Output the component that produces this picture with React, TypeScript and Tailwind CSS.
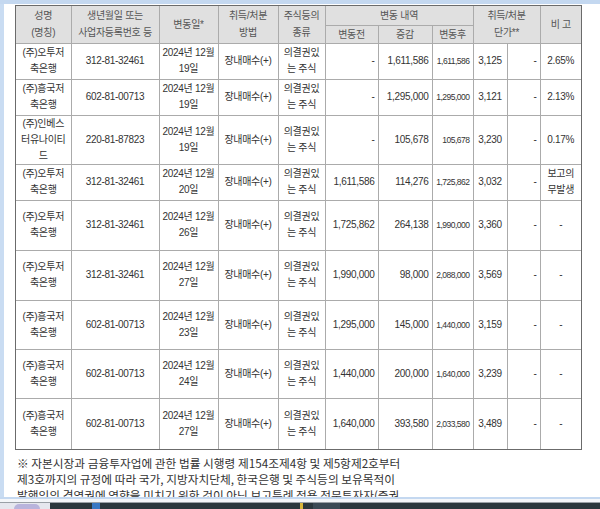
import React from "react";

type Row = {
  name: string[];
  reg: string;
  day: string;
  before: string;
  change: string;
  after: string;
  price: string;
  note: string[];
  h: string;
};

const OTU = ["(주)오투저", "축은행"];
const HK = ["(주)흥국저", "축은행"];

const ROWS: Row[] = [
  { name: OTU, reg: "312-81-32461", day: "19일", before: "-", change: "1,611,586", after: "1,611,586", price: "3,125", note: ["2.65%"], h: "h-[36px]" },
  { name: HK, reg: "602-81-00713", day: "19일", before: "-", change: "1,295,000", after: "1,295,000", price: "3,121", note: ["2.13%"], h: "h-[36px]" },
  { name: ["(주)인베스", "터유나이티", "드"], reg: "220-81-87823", day: "19일", before: "-", change: "105,678", after: "105,678", price: "3,230", note: ["0.17%"], h: "h-[49px]" },
  { name: OTU, reg: "312-81-32461", day: "20일", before: "1,611,586", change: "114,276", after: "1,725,862", price: "3,032", note: ["보고의", "무발생"], h: "h-[36px]" },
  { name: OTU, reg: "312-81-32461", day: "26일", before: "1,725,862", change: "264,138", after: "1,990,000", price: "3,360", note: ["-"], h: "h-[50px]" },
  { name: OTU, reg: "312-81-32461", day: "27일", before: "1,990,000", change: "98,000", after: "2,088,000", price: "3,569", note: ["-"], h: "h-[50px]" },
  { name: HK, reg: "602-81-00713", day: "23일", before: "1,295,000", change: "145,000", after: "1,440,000", price: "3,159", note: ["-"], h: "h-[49px]" },
  { name: HK, reg: "602-81-00713", day: "24일", before: "1,440,000", change: "200,000", after: "1,640,000", price: "3,239", note: ["-"], h: "h-[49px]" },
  { name: HK, reg: "602-81-00713", day: "27일", before: "1,640,000", change: "393,580", after: "2,033,580", price: "3,489", note: ["-"], h: "h-[51px]" },
];

function Lines({ lines }: { lines: string[] }) {
  return (
    <>
      {lines.map((l, i) => (
        <React.Fragment key={i}>
          {i > 0 && <br />}
          {l}
        </React.Fragment>
      ))}
    </>
  );
}

const th = "border border-[#ababab] bg-[#e0e0e0] px-[2px] py-0 text-center align-middle font-normal text-[#555] leading-[17px]";
const td = "border border-[#ababab] px-[3px] py-0 align-middle text-[#333] leading-[16px]";

export default function App() {
  return (
    <div className="relative flex h-[509px] w-[600px] flex-col overflow-hidden bg-white font-['Liberation_Sans','Noto_Sans_CJK_KR',sans-serif]">
      <div className="h-[4px] shrink-0 bg-[#c4d8f0]" />
      <div className="flex min-h-0 flex-1">
        <div className="w-[4px] shrink-0 bg-[#c9dcf2]" />
        <div className="min-w-0 flex-1 pl-[11px] pt-[1px]">
          <div className="w-[567px] border border-[#6b6b6b]">
            <table className="w-full table-fixed border-collapse border-hidden text-[10px] tracking-[-0.3px]">
              <colgroup>
                <col className="w-[55px]" />
                <col className="w-[88px]" />
                <col className="w-[59px]" />
                <col className="w-[60px]" />
                <col className="w-[47px]" />
                <col className="w-[53px]" />
                <col className="w-[54px]" />
                <col className="w-[41px]" />
                <col className="w-[34px]" />
                <col className="w-[33px]" />
                <col className="w-[41px]" />
              </colgroup>
              <thead>
                <tr className="h-[19px]">
                  <th rowSpan={2} className={th}>성명<br />(명칭)</th>
                  <th rowSpan={2} className={th}>생년월일 또는<br />사업자등록번호 등</th>
                  <th rowSpan={2} className={th}>변동일*</th>
                  <th rowSpan={2} className={th}>취득/처분<br />방법</th>
                  <th rowSpan={2} className={th}>주식등의<br />종류</th>
                  <th colSpan={3} className={th}>변동 내역</th>
                  <th colSpan={2} rowSpan={2} className={th}>취득/처분<br />단가**</th>
                  <th rowSpan={2} className={th}>비 고</th>
                </tr>
                <tr className="h-[18px]">
                  <th className={th}>변동전</th>
                  <th className={th}>증감</th>
                  <th className={th}>변동후</th>
                </tr>
              </thead>
              <tbody>
                {ROWS.map((r, i) => (
                  <tr key={i} className={r.h}>
                    <td className={`${td} text-center`}><Lines lines={r.name} /></td>
                    <td className={`${td} text-center`}>{r.reg}</td>
                    <td className={`${td} text-center`}>2024년 12월<br />{r.day}</td>
                    <td className={`${td} text-center`}>장내매수(+)</td>
                    <td className={`${td} text-center`}>의결권있<br />는 주식</td>
                    <td className={`${td} text-right`}>{r.before}</td>
                    <td className={`${td} text-right`}>{r.change}</td>
                    <td className={`${td} text-right text-[8.5px] tracking-[-0.5px]`}>{r.after}</td>
                    <td className={`${td} text-center`}>{r.price}</td>
                    <td className={`${td} text-right`}>-</td>
                    <td className={`${td} text-center`}><Lines lines={r.note} /></td>
                  </tr>
                ))}
              </tbody>
            </table>
          </div>
          <p className="mt-[5px] pl-[2px] font-['Noto_Sans_CJK_KR',sans-serif] text-[11.7px] leading-[16px] text-[#333]">
            ※ 자본시장과 금융투자업에 관한 법률 시행령 제154조제4항 및 제5항제2호부터
            <br />
            제3호까지의 규정에 따라 국가, 지방자치단체, 한국은행 및 주식등의 보유목적이
            <br />
            발행인의 경영권에 영향을 미치기 위한 것이 아닌 보고특례 적용 전문투자자(증권
          </p>
        </div>
      </div>
      <div className="h-[2px] shrink-0 bg-[#c4d8f0]" />
      <div className="h-[4px] shrink-0 border-b border-[#9aa0a6] bg-[#f4f6f9]" />
      <div className="flex h-[6px] shrink-0 bg-[#2b373d]">
        <div className="flex w-[50px] items-start bg-[#e6e7ee] pl-[14px]">
          <div className="mt-[1px] h-[10px] w-[26px] rounded-full bg-[#b9b4dc]" />
        </div>
        <div className="ml-[42px] w-[8px] bg-[#3a78c4]" />
        <div className="ml-[200px] w-[3px] bg-[#d9b63a]" />
        <div className="ml-[10px] w-[27px] bg-[#3b4a55]" />
      </div>
    </div>
  );
}
